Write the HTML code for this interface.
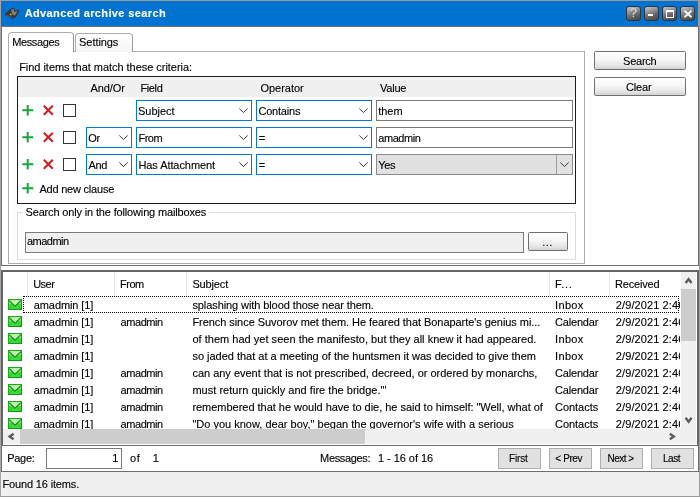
<!DOCTYPE html>
<html><head><meta charset="utf-8"><title>Advanced archive search</title>
<style>
*{box-sizing:border-box;margin:0;padding:0}
html,body{width:700px;height:497px;overflow:hidden;background:#fff}
body{font-family:"Liberation Sans",sans-serif;font-size:11px;color:#000;position:relative}
.a{position:absolute;white-space:nowrap}
.t{position:absolute;white-space:pre;line-height:13px;height:13px;-webkit-text-stroke:0.12px currentColor}
.combo{position:absolute;background:#fff;border:1px solid #0078d7;height:21px}
.inp{position:absolute;background:#fff;border:1px solid #7a7a7a;height:21px}
.btn{position:absolute;background:#e1e1e1;border:1px solid #adadad;height:21px;width:43px}
.xbtn{position:absolute;border:1px solid #707070;border-radius:1.5px;background:linear-gradient(#ffffff,#f6f6f6 45%,#e2e2e2 85%,#d0d0d0);height:19px;width:92px}
.chk{position:absolute;width:13px;height:13px;border:1px solid #333;background:#fff}
.tb{position:absolute;top:6px;width:15px;height:15px;border-radius:3px;border:1px solid #2c3640;background:linear-gradient(160deg,#c8c8c8,#9a9a9a 30%,#686868 60%,#444)}
.hd{position:absolute;top:272px;height:24px;width:1px;background:#e5e5e5}
</style></head><body>
<div style="position:absolute;left:0;top:0;width:700px;height:497px;will-change:transform">
<!-- window frame -->
<div class="a" style="left:0;top:0;width:700px;height:497px;background:#9a9a9a"></div>
<div class="a" style="left:1px;top:1px;width:697px;height:26px;background:#0072cf"></div>

<svg class="a" style="left:0;top:0" width="24" height="24" viewBox="0 0 24 24">
<path d="M5 13.8 L11.5 8.2 L13.8 8 L15.2 10.5 L18.6 9.8 L19.2 11.5 L15.8 17 L13 19 L10.5 18 L10.6 16 L8.3 16.6 L5.2 15.3 Z" fill="#353535"/>
<path d="M11.8 9 L13.3 9 L14.4 11.8 L17.6 11.2 L14.6 15.8 L12.2 14 L11.2 11 Z" fill="#7e7e7e"/>
<path d="M6.5 14.8 L8.6 15.9 M11.6 17 L13.2 17.9" stroke="#8d3aa8" stroke-width="0.9"/>
<circle cx="10.7" cy="14.4" r="1" fill="#f2a30f"/>
</svg>
<div class="t" style="left:24.7px;top:5.5px;letter-spacing:0.374px;font-weight:bold;font-size:11px;color:#fff;line-height:15px;height:15px;">Advanced archive search</div>
<div class="tb" style="left:626px"><div class="t" style="left:0;top:0;width:13px;text-align:center;color:#d4d8dc;font-size:12px;line-height:13px">?</div></div>
<div class="tb" style="left:644px"><div class="a" style="left:3px;top:7px;width:5px;height:2px;background:#fff"></div></div>
<div class="tb" style="left:662px"><div class="a" style="left:3px;top:3px;width:8px;height:8px;border:1px solid #fff;border-top-width:2px"></div></div>
<div class="tb" style="left:680px"><svg class="a" style="left:2px;top:2px" width="10" height="10" viewBox="0 0 10 10"><path d="M1.5 1.8 L8.5 8.2 M8.5 1.8 L1.5 8.2" stroke="#fff" stroke-width="2"/></svg></div>

<div class="a" style="left:0;top:0;width:1px;height:497px;background:#a6a6a6"></div>
<div class="a" style="left:1px;top:26px;width:698px;height:240px;background:#707070"></div>
<div class="a" style="left:2px;top:27px;width:696px;height:238px;background:#fff"></div>
<div class="a" style="left:1px;top:266px;width:698px;height:4px;background:#fff"></div>
<div class="a" style="left:1px;top:270px;width:698px;height:175px;background:#666"></div>
<div class="a" style="left:1px;top:445px;width:698px;height:27px;background:#6e6e6e"></div>

<div class="a" style="left:8px;top:51px;width:577px;height:213px;border:1px solid #acacac;background:#fff"></div>
<div class="a" style="left:75px;top:33px;width:58px;height:19px;border:1px solid #acacac;border-right-color:#9a9a9a;border-bottom:none;border-radius:4px 4px 0 0;background:linear-gradient(#fff,#f4f4f4)"></div>
<div class="a" style="left:8px;top:32px;width:66px;height:20px;border:1px solid #acacac;border-right-color:#8e8e8e;border-bottom:none;border-radius:4px 4px 0 0;background:#fff"></div>
<div class="t" style="left:12.2px;top:36px;letter-spacing:-0.380px;">Messages</div>
<div class="t" style="left:79.1px;top:36px;letter-spacing:-0.069px;">Settings</div>
<div class="t" style="left:19.2px;top:61px;letter-spacing:-0.036px;">Find items that match these criteria:</div>
<div class="a" style="left:17px;top:76px;width:559px;height:128px;border:1px solid #1c1c1c;background:#fff"></div>
<div class="a" style="left:18px;top:77px;width:557px;height:20px;background:#f0f0f0"></div>
<div class="t" style="left:90.4px;top:82px;letter-spacing:-0.043px;">And/Or</div>
<div class="t" style="left:140.4px;top:82px;letter-spacing:-0.369px;">Field</div>
<div class="t" style="left:260.4px;top:82px;letter-spacing:-0.015px;">Operator</div>
<div class="t" style="left:379.9px;top:82px;letter-spacing:-0.186px;">Value</div>
<svg class="a" style="left:22px;top:105px" width="12" height="11" viewBox="0 0 12 11"><path d="M5.7 0 V10.4 M0.3 5.2 H11.3" stroke="#16a63c" stroke-width="2"/></svg>
<svg class="a" style="left:43px;top:105px" width="11" height="11" viewBox="0 0 11 11"><path d="M0.8 0.7 L9.8 9.7 M9.8 0.7 L0.8 9.7" stroke="#d01c1c" stroke-width="2"/></svg>
<div class="chk" style="left:63px;top:104px"></div>
<div class="combo" style="left:136px;top:100px;width:116px"><svg class="a" style="right:3.5px;top:7.2px" width="9" height="6" viewBox="0 0 9 6"><path d="M0.3 0.5 L4.5 4.5 L8.7 0.5" fill="none" stroke="#3c3c3c" stroke-width="1"/></svg></div>
<div class="t" style="left:138.1px;top:105px;letter-spacing:-0.058px;">Subject</div>
<div class="combo" style="left:256px;top:100px;width:116px"><svg class="a" style="right:3.5px;top:7.2px" width="9" height="6" viewBox="0 0 9 6"><path d="M0.3 0.5 L4.5 4.5 L8.7 0.5" fill="none" stroke="#3c3c3c" stroke-width="1"/></svg></div>
<div class="t" style="left:258.4px;top:105px;letter-spacing:-0.190px;">Contains</div>
<div class="inp" style="left:376px;top:100px;width:197px"></div>
<div class="t" style="left:378.3px;top:105px;letter-spacing:-0.067px;">them</div>
<svg class="a" style="left:22px;top:132px" width="12" height="11" viewBox="0 0 12 11"><path d="M5.7 0 V10.4 M0.3 5.2 H11.3" stroke="#16a63c" stroke-width="2"/></svg>
<svg class="a" style="left:43px;top:132px" width="11" height="11" viewBox="0 0 11 11"><path d="M0.8 0.7 L9.8 9.7 M9.8 0.7 L0.8 9.7" stroke="#d01c1c" stroke-width="2"/></svg>
<div class="chk" style="left:63px;top:131px"></div>
<div class="combo" style="left:86px;top:127px;width:46px"><svg class="a" style="right:3.5px;top:7.2px" width="9" height="6" viewBox="0 0 9 6"><path d="M0.3 0.5 L4.5 4.5 L8.7 0.5" fill="none" stroke="#3c3c3c" stroke-width="1"/></svg></div>
<div class="t" style="left:88.2px;top:132px;letter-spacing:-0.217px;">Or</div>
<div class="combo" style="left:136px;top:127px;width:116px"><svg class="a" style="right:3.5px;top:7.2px" width="9" height="6" viewBox="0 0 9 6"><path d="M0.3 0.5 L4.5 4.5 L8.7 0.5" fill="none" stroke="#3c3c3c" stroke-width="1"/></svg></div>
<div class="t" style="left:138.4px;top:132px;letter-spacing:-0.468px;">From</div>
<div class="combo" style="left:256px;top:127px;width:116px"><svg class="a" style="right:3.5px;top:7.2px" width="9" height="6" viewBox="0 0 9 6"><path d="M0.3 0.5 L4.5 4.5 L8.7 0.5" fill="none" stroke="#3c3c3c" stroke-width="1"/></svg></div>
<div class="t" style="left:258.8px;top:132px;">=</div>
<div class="inp" style="left:376px;top:127px;width:197px"></div>
<div class="t" style="left:378.3px;top:132px;letter-spacing:-0.450px;">amadmin</div>
<svg class="a" style="left:22px;top:159px" width="12" height="11" viewBox="0 0 12 11"><path d="M5.7 0 V10.4 M0.3 5.2 H11.3" stroke="#16a63c" stroke-width="2"/></svg>
<svg class="a" style="left:43px;top:159px" width="11" height="11" viewBox="0 0 11 11"><path d="M0.8 0.7 L9.8 9.7 M9.8 0.7 L0.8 9.7" stroke="#d01c1c" stroke-width="2"/></svg>
<div class="chk" style="left:63px;top:158px"></div>
<div class="combo" style="left:86px;top:154px;width:46px"><svg class="a" style="right:3.5px;top:7.2px" width="9" height="6" viewBox="0 0 9 6"><path d="M0.3 0.5 L4.5 4.5 L8.7 0.5" fill="none" stroke="#3c3c3c" stroke-width="1"/></svg></div>
<div class="t" style="left:88.4px;top:159px;letter-spacing:-0.293px;">And</div>
<div class="combo" style="left:136px;top:154px;width:116px"><svg class="a" style="right:3.5px;top:7.2px" width="9" height="6" viewBox="0 0 9 6"><path d="M0.3 0.5 L4.5 4.5 L8.7 0.5" fill="none" stroke="#3c3c3c" stroke-width="1"/></svg></div>
<div class="t" style="left:138.4px;top:159px;letter-spacing:-0.068px;">Has Attachment</div>
<div class="combo" style="left:256px;top:154px;width:116px"><svg class="a" style="right:3.5px;top:7.2px" width="9" height="6" viewBox="0 0 9 6"><path d="M0.3 0.5 L4.5 4.5 L8.7 0.5" fill="none" stroke="#3c3c3c" stroke-width="1"/></svg></div>
<div class="t" style="left:258.8px;top:159px;">=</div>
<div class="inp" style="left:376px;top:154px;width:197px;background:#e1e1e1;border-color:#8a8a8a"><div class="a" style="right:15px;top:0;width:1px;height:19px;background:#9c9c9c"></div><svg class="a" style="right:3.5px;top:7.2px" width="9" height="6" viewBox="0 0 9 6"><path d="M0.3 0.5 L4.5 4.5 L8.7 0.5" fill="none" stroke="#3c3c3c" stroke-width="1"/></svg></div>
<div class="t" style="left:378.3px;top:159px;letter-spacing:-0.318px;">Yes</div>
<svg class="a" style="left:22px;top:183px" width="12" height="11" viewBox="0 0 12 11"><path d="M5.7 0 V10.4 M0.3 5.2 H11.3" stroke="#16a63c" stroke-width="2"/></svg>
<div class="t" style="left:39.4px;top:183px;letter-spacing:-0.212px;">Add new clause</div>
<div class="a" style="left:17px;top:212px;width:559px;height:48px;border:1px solid #dcdcdc;background:#fff"></div>
<div class="a" style="left:23px;top:205px;width:186px;height:14px;background:#fff"></div>
<div class="t" style="left:25.5px;top:206px;letter-spacing:-0.155px;">Search only in the following mailboxes</div>
<div class="inp" style="left:25px;top:232px;width:499px;background:#f0f0f0"></div>
<div class="t" style="left:27.0px;top:235px;letter-spacing:-0.521px;">amadmin</div>
<div class="xbtn" style="left:528px;top:232px;width:40px;height:19px"></div>
<div class="t" style="left:542.3px;top:236px;letter-spacing:0.443px;">...</div>
<div class="xbtn" style="left:594px;top:51px"></div><div class="xbtn" style="left:594px;top:77px"></div>
<div class="t" style="left:623.1px;top:55px;letter-spacing:-0.243px;">Search</div>
<div class="t" style="left:626.0px;top:81px;letter-spacing:-0.179px;">Clear</div>
<div class="a" style="left:3px;top:272px;width:694px;height:172px;background:#fff"></div>
<div class="hd" style="left:27px"></div><div class="hd" style="left:114px"></div><div class="hd" style="left:186px"></div><div class="hd" style="left:549px"></div><div class="hd" style="left:609px"></div>
<div class="t" style="left:33.2px;top:278px;letter-spacing:-0.509px;">User</div>
<div class="t" style="left:120.1px;top:278px;letter-spacing:-0.493px;">From</div>
<div class="t" style="left:192.4px;top:278px;letter-spacing:-0.143px;">Subject</div>
<div class="t" style="left:555.1px;top:278px;letter-spacing:0.657px;">F...</div>
<div class="t" style="left:615.1px;top:278px;letter-spacing:-0.195px;">Received</div>
<div class="a" style="left:0;top:295px;width:681px;height:134px;overflow:hidden">
<svg class="a" style="left:8px;top:4px" width="14" height="11" viewBox="0 0 14 11"><rect x="0.5" y="0.5" width="13" height="10" fill="#36e036" stroke="#1fa51f"/><rect x="1" y="1" width="12" height="4" fill="#6cee62"/><path d="M1.2 1.2 L7 7 L12.8 1.2 Z" fill="#c6f7b2"/><path d="M1.2 1.6 L7 7.2 L12.8 1.6" fill="none" stroke="#1f8a1f" stroke-width="1.2"/><path d="M1 10 L4.6 6.4 M13 10 L9.4 6.4" stroke="#2fb82f" stroke-width="0.8"/><path d="M0.5 10.5 H13.5 V0.5" fill="none" stroke="#14961a"/></svg>
<div class="t" style="left:33.8px;top:4px;letter-spacing:-0.103px;">amadmin [1]</div>
<div class="t" style="left:192.4px;top:4px;letter-spacing:-0.088px;">splashing with blood those near them.</div>
<div class="t" style="left:555.1px;top:4px;letter-spacing:0.316px;">Inbox</div>
<div class="t" style="left:615.8px;top:4px;letter-spacing:0.102px;width:64.1px;overflow:hidden">2/9/2021 2:46</div>
<svg class="a" style="left:8px;top:21px" width="14" height="11" viewBox="0 0 14 11"><rect x="0.5" y="0.5" width="13" height="10" fill="#36e036" stroke="#1fa51f"/><rect x="1" y="1" width="12" height="4" fill="#6cee62"/><path d="M1.2 1.2 L7 7 L12.8 1.2 Z" fill="#c6f7b2"/><path d="M1.2 1.6 L7 7.2 L12.8 1.6" fill="none" stroke="#1f8a1f" stroke-width="1.2"/><path d="M1 10 L4.6 6.4 M13 10 L9.4 6.4" stroke="#2fb82f" stroke-width="0.8"/><path d="M0.5 10.5 H13.5 V0.5" fill="none" stroke="#14961a"/></svg>
<div class="t" style="left:33.8px;top:21px;letter-spacing:-0.103px;">amadmin [1]</div>
<div class="t" style="left:120.6px;top:21px;letter-spacing:-0.450px;">amadmin</div>
<div class="t" style="left:192.4px;top:21px;letter-spacing:-0.056px;">French since Suvorov met them. He feared that Bonaparte's genius mi...</div>
<div class="t" style="left:555.1px;top:21px;letter-spacing:-0.205px;">Calendar</div>
<div class="t" style="left:615.8px;top:21px;letter-spacing:0.102px;width:64.1px;overflow:hidden">2/9/2021 2:46</div>
<svg class="a" style="left:8px;top:38px" width="14" height="11" viewBox="0 0 14 11"><rect x="0.5" y="0.5" width="13" height="10" fill="#36e036" stroke="#1fa51f"/><rect x="1" y="1" width="12" height="4" fill="#6cee62"/><path d="M1.2 1.2 L7 7 L12.8 1.2 Z" fill="#c6f7b2"/><path d="M1.2 1.6 L7 7.2 L12.8 1.6" fill="none" stroke="#1f8a1f" stroke-width="1.2"/><path d="M1 10 L4.6 6.4 M13 10 L9.4 6.4" stroke="#2fb82f" stroke-width="0.8"/><path d="M0.5 10.5 H13.5 V0.5" fill="none" stroke="#14961a"/></svg>
<div class="t" style="left:33.8px;top:38px;letter-spacing:-0.103px;">amadmin [1]</div>
<div class="t" style="left:192.4px;top:38px;letter-spacing:0.022px;">of them had yet seen the manifesto, but they all knew it had appeared.</div>
<div class="t" style="left:555.1px;top:38px;letter-spacing:0.316px;">Inbox</div>
<div class="t" style="left:615.8px;top:38px;letter-spacing:0.102px;width:64.1px;overflow:hidden">2/9/2021 2:46</div>
<svg class="a" style="left:8px;top:55px" width="14" height="11" viewBox="0 0 14 11"><rect x="0.5" y="0.5" width="13" height="10" fill="#36e036" stroke="#1fa51f"/><rect x="1" y="1" width="12" height="4" fill="#6cee62"/><path d="M1.2 1.2 L7 7 L12.8 1.2 Z" fill="#c6f7b2"/><path d="M1.2 1.6 L7 7.2 L12.8 1.6" fill="none" stroke="#1f8a1f" stroke-width="1.2"/><path d="M1 10 L4.6 6.4 M13 10 L9.4 6.4" stroke="#2fb82f" stroke-width="0.8"/><path d="M0.5 10.5 H13.5 V0.5" fill="none" stroke="#14961a"/></svg>
<div class="t" style="left:33.8px;top:55px;letter-spacing:-0.103px;">amadmin [1]</div>
<div class="t" style="left:192.4px;top:55px;letter-spacing:-0.010px;">so jaded that at a meeting of the huntsmen it was decided to give them</div>
<div class="t" style="left:555.1px;top:55px;letter-spacing:0.316px;">Inbox</div>
<div class="t" style="left:615.8px;top:55px;letter-spacing:0.102px;width:64.1px;overflow:hidden">2/9/2021 2:46</div>
<svg class="a" style="left:8px;top:72px" width="14" height="11" viewBox="0 0 14 11"><rect x="0.5" y="0.5" width="13" height="10" fill="#36e036" stroke="#1fa51f"/><rect x="1" y="1" width="12" height="4" fill="#6cee62"/><path d="M1.2 1.2 L7 7 L12.8 1.2 Z" fill="#c6f7b2"/><path d="M1.2 1.6 L7 7.2 L12.8 1.6" fill="none" stroke="#1f8a1f" stroke-width="1.2"/><path d="M1 10 L4.6 6.4 M13 10 L9.4 6.4" stroke="#2fb82f" stroke-width="0.8"/><path d="M0.5 10.5 H13.5 V0.5" fill="none" stroke="#14961a"/></svg>
<div class="t" style="left:33.8px;top:72px;letter-spacing:-0.103px;">amadmin [1]</div>
<div class="t" style="left:120.6px;top:72px;letter-spacing:-0.450px;">amadmin</div>
<div class="t" style="left:192.4px;top:72px;letter-spacing:-0.008px;">can any event that is not prescribed, decreed, or ordered by monarchs,</div>
<div class="t" style="left:555.1px;top:72px;letter-spacing:-0.205px;">Calendar</div>
<div class="t" style="left:615.8px;top:72px;letter-spacing:0.102px;width:64.1px;overflow:hidden">2/9/2021 2:46</div>
<svg class="a" style="left:8px;top:89px" width="14" height="11" viewBox="0 0 14 11"><rect x="0.5" y="0.5" width="13" height="10" fill="#36e036" stroke="#1fa51f"/><rect x="1" y="1" width="12" height="4" fill="#6cee62"/><path d="M1.2 1.2 L7 7 L12.8 1.2 Z" fill="#c6f7b2"/><path d="M1.2 1.6 L7 7.2 L12.8 1.6" fill="none" stroke="#1f8a1f" stroke-width="1.2"/><path d="M1 10 L4.6 6.4 M13 10 L9.4 6.4" stroke="#2fb82f" stroke-width="0.8"/><path d="M0.5 10.5 H13.5 V0.5" fill="none" stroke="#14961a"/></svg>
<div class="t" style="left:33.8px;top:89px;letter-spacing:-0.103px;">amadmin [1]</div>
<div class="t" style="left:120.6px;top:89px;letter-spacing:-0.450px;">amadmin</div>
<div class="t" style="left:192.4px;top:89px;letter-spacing:0.028px;">must return quickly and fire the bridge."'</div>
<div class="t" style="left:555.1px;top:89px;letter-spacing:-0.205px;">Calendar</div>
<div class="t" style="left:615.8px;top:89px;letter-spacing:0.102px;width:64.1px;overflow:hidden">2/9/2021 2:46</div>
<svg class="a" style="left:8px;top:106px" width="14" height="11" viewBox="0 0 14 11"><rect x="0.5" y="0.5" width="13" height="10" fill="#36e036" stroke="#1fa51f"/><rect x="1" y="1" width="12" height="4" fill="#6cee62"/><path d="M1.2 1.2 L7 7 L12.8 1.2 Z" fill="#c6f7b2"/><path d="M1.2 1.6 L7 7.2 L12.8 1.6" fill="none" stroke="#1f8a1f" stroke-width="1.2"/><path d="M1 10 L4.6 6.4 M13 10 L9.4 6.4" stroke="#2fb82f" stroke-width="0.8"/><path d="M0.5 10.5 H13.5 V0.5" fill="none" stroke="#14961a"/></svg>
<div class="t" style="left:33.8px;top:106px;letter-spacing:-0.103px;">amadmin [1]</div>
<div class="t" style="left:120.6px;top:106px;letter-spacing:-0.450px;">amadmin</div>
<div class="t" style="left:192.4px;top:106px;letter-spacing:-0.025px;">remembered that he would have to die, he said to himself: "Well, what of</div>
<div class="t" style="left:555.1px;top:106px;letter-spacing:-0.053px;">Contacts</div>
<div class="t" style="left:615.8px;top:106px;letter-spacing:0.102px;width:64.1px;overflow:hidden">2/9/2021 2:46</div>
<svg class="a" style="left:8px;top:123px" width="14" height="11" viewBox="0 0 14 11"><rect x="0.5" y="0.5" width="13" height="10" fill="#36e036" stroke="#1fa51f"/><rect x="1" y="1" width="12" height="4" fill="#6cee62"/><path d="M1.2 1.2 L7 7 L12.8 1.2 Z" fill="#c6f7b2"/><path d="M1.2 1.6 L7 7.2 L12.8 1.6" fill="none" stroke="#1f8a1f" stroke-width="1.2"/><path d="M1 10 L4.6 6.4 M13 10 L9.4 6.4" stroke="#2fb82f" stroke-width="0.8"/><path d="M0.5 10.5 H13.5 V0.5" fill="none" stroke="#14961a"/></svg>
<div class="t" style="left:33.8px;top:123px;letter-spacing:-0.103px;">amadmin [1]</div>
<div class="t" style="left:120.6px;top:123px;letter-spacing:-0.450px;">amadmin</div>
<div class="t" style="left:192.4px;top:123px;letter-spacing:0.005px;">"Do you know, dear boy," began the governor's wife with a serious</div>
<div class="t" style="left:555.1px;top:123px;letter-spacing:-0.053px;">Contacts</div>
<div class="t" style="left:615.8px;top:123px;letter-spacing:0.102px;width:64.1px;overflow:hidden">2/9/2021 2:46</div>
<div class="a" style="left:23px;top:1px;width:656px;height:17px;border:1px dotted #000"></div>
</div>
<div class="a" style="left:681px;top:272px;width:15px;height:172px;background:#f0f0f0"></div>
<div class="a" style="left:681px;top:289px;width:15px;height:52px;background:#cdcdcd"></div>
<div class="a" style="left:3px;top:429px;width:693px;height:15px;background:#f0f0f0"></div>
<div class="a" style="left:20px;top:429px;width:345px;height:15px;background:#cdcdcd"></div>
<svg class="a" style="left:0;top:0" width="700" height="497" viewBox="0 0 700 497"><g fill="none" stroke="#5c5c5c" stroke-width="2.4">
<path d="M685.6 283 L688.6 279.2 L691.6 283"/>
<path d="M685.6 417.8 L688.6 421.8 L691.6 417.8"/>
<path d="M13.6 433.7 L9.6 436.5 L13.6 439.3"/>
<path d="M669.8 433.7 L673.8 436.5 L669.8 439.3"/>
</g></svg>

<div class="a" style="left:3px;top:444px;width:694px;height:1px;background:#fff"></div>
<div class="a" style="left:2px;top:446px;width:696px;height:25px;background:#fff"></div>
<div class="inp" style="left:46px;top:448px;width:76px"></div>
<div class="t" style="left:7.3px;top:452px;letter-spacing:-0.330px;">Page:</div>
<div class="t" style="left:112.3px;top:452px;">1</div>
<div class="t" style="left:130.0px;top:452px;letter-spacing:0.556px;">of</div>
<div class="t" style="left:152.7px;top:452px;">1</div>
<div class="t" style="left:320.1px;top:452px;letter-spacing:-0.356px;">Messages:</div>
<div class="t" style="left:377.9px;top:452px;letter-spacing:-0.038px;">1 - 16 of 16</div>
<div class="btn" style="left:498px;top:448px"></div>
<div class="t" style="left:509.0px;top:452.3px;letter-spacing:-0.171px;font-size:10px;">First</div>
<div class="btn" style="left:549px;top:448px"></div>
<div class="t" style="left:555.3px;top:452.3px;letter-spacing:-0.744px;font-size:10px;">&lt;</div>
<div class="t" style="left:563.3px;top:452.3px;letter-spacing:-0.491px;font-size:10px;">Prev</div>
<div class="btn" style="left:600px;top:448px"></div>
<div class="t" style="left:607.5px;top:452.3px;letter-spacing:-0.491px;font-size:10px;">Next</div>
<div class="t" style="left:628.2px;top:452.3px;letter-spacing:-0.744px;font-size:10px;">&gt;</div>
<div class="btn" style="left:651px;top:448px"></div>
<div class="t" style="left:663.0px;top:452.3px;letter-spacing:-0.452px;font-size:10px;">Last</div>
<div class="a" style="left:1px;top:472px;width:698px;height:24px;background:#f0f0f0"></div>
<div class="t" style="left:2.5px;top:478px;letter-spacing:-0.152px;">Found 16 items.</div>
</div>
</body></html>
